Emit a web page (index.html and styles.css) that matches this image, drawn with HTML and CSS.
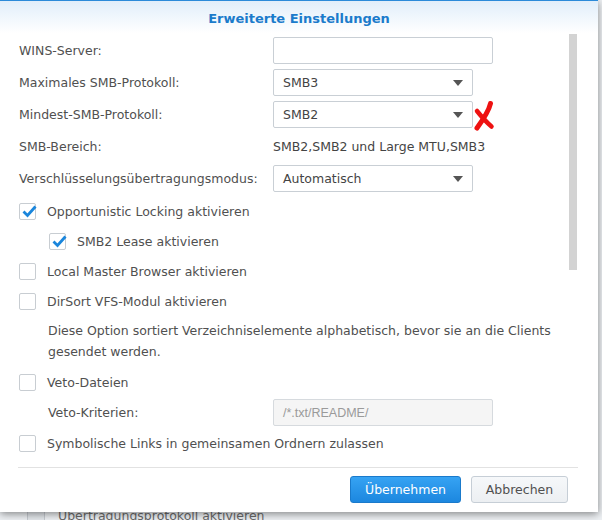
FILE: index.html
```html
<!DOCTYPE html>
<html lang="de">
<head>
<meta charset="utf-8">
<title>Erweiterte Einstellungen</title>
<link rel="stylesheet" href="styles.css">
</head>
<body>
<div class="page">
  <div class="bg-row">
    <span class="bg-box"></span>
    <span class="bg-text">Übertragungsprotokoll aktivieren</span>
  </div>
</div>

<div class="dialog">
  <div class="header">Erweiterte Einstellungen</div>
  <div class="body">
    <div class="scroll">
      <div class="field">
        <span class="label">WINS-Server:</span>
        <span class="input wide"></span>
      </div>
      <div class="field">
        <span class="label">Maximales SMB-Protokoll:</span>
        <span class="select">SMB3<span class="arrow"></span></span>
      </div>
      <div class="field">
        <span class="label">Mindest-SMB-Protokoll:</span>
        <span class="select">SMB2<span class="arrow"></span></span>
        <svg class="redx" width="22" height="30" viewBox="0 0 22 30">
          <path d="M17.5 2.5 C16 9 12 16 4 27" fill="none" stroke="#ee1111" stroke-width="5" stroke-linecap="round"/>
          <path d="M4 10 C8 15 12 20 18.5 25.5" fill="none" stroke="#ee1111" stroke-width="4.5" stroke-linecap="round"/>
        </svg>
      </div>
      <div class="field">
        <span class="label">SMB-Bereich:</span>
        <span class="value">SMB2,SMB2 und Large MTU,SMB3</span>
      </div>
      <div class="field">
        <span class="label">Verschlüsselungsübertragungsmodus:</span>
        <span class="select">Automatisch<span class="arrow"></span></span>
      </div>

      <div class="check first">
        <span class="box on"><svg width="15" height="13" viewBox="0 0 15 13"><path d="M1.5 6.5 L5.5 10.5 L13.5 1.5" fill="none" stroke="#1a86dc" stroke-width="2.8"/></svg></span>
        <span>Opportunistic Locking aktivieren</span>
      </div>
      <div class="check sub">
        <span class="box on"><svg width="15" height="13" viewBox="0 0 15 13"><path d="M1.5 6.5 L5.5 10.5 L13.5 1.5" fill="none" stroke="#1a86dc" stroke-width="2.8"/></svg></span>
        <span>SMB2 Lease aktivieren</span>
      </div>
      <div class="check">
        <span class="box"></span>
        <span>Local Master Browser aktivieren</span>
      </div>
      <div class="check">
        <span class="box"></span>
        <span>DirSort VFS-Modul aktivieren</span>
      </div>
      <p class="desc">Diese Option sortiert Verzeichniselemente alphabetisch, bevor sie an die Clients gesendet werden.</p>
      <div class="check">
        <span class="box"></span>
        <span>Veto-Dateien</span>
      </div>
      <div class="field indent">
        <span class="label">Veto-Kriterien:</span>
        <span class="input wide disabled">/*.txt/README/</span>
      </div>
      <div class="check">
        <span class="box"></span>
        <span>Symbolische Links in gemeinsamen Ordnern zulassen</span>
      </div>
    </div>
    <div class="scrollbar"></div>
  </div>
  <div class="footer">
    <button class="btn primary">Übernehmen</button>
    <button class="btn">Abbrechen</button>
  </div>
</div>
</body>
</html>
```

FILE: styles.css
```css
html, body {
  margin: 0;
  padding: 0;
}
body {
  width: 602px;
  height: 520px;
  overflow: hidden;
  background: #eef1f4;
  font-family: "DejaVu Sans", Verdana, sans-serif;
  font-size: 12.5px;
  color: #505050;
  position: relative;
}
.page {
  height: 520px;
  display: flex;
  flex-direction: column;
  justify-content: flex-end;
}
.bg-row {
  display: flex;
  align-items: center;
  gap: 13px;
  padding: 0 0 0 27px;
  height: 24px;
  margin-bottom: -7px;
}
.bg-box {
  width: 16px;
  height: 16px;
  border: 1px solid #c7ccd2;
  background: #e4e8ec;
  border-radius: 2px;
}
.bg-text {
  color: #6a6a6a;
}

.dialog {
  position: absolute;
  left: 0;
  top: 0;
  width: 598px;
  height: 512px;
  background: #fff;
  box-shadow: 0 2px 8px rgba(0, 0, 0, 0.45);
  display: flex;
  flex-direction: column;
}
.header {
  border-top: 1px solid #2b8ad9;
  background: linear-gradient(#e1eefa, #ffffff);
  color: #1b7bcb;
  font-weight: bold;
  font-size: 13px;
  display: flex;
  align-items: center;
  justify-content: center;
  box-sizing: border-box;
  height: 33px;
  padding-top: 2px;
}
.body {
  position: relative;
  height: 430px;
  overflow: hidden;
}
.scroll {
  padding: 4px 0 0 19px;
}
.field {
  display: flex;
  align-items: center;
  height: 27px;
  margin-bottom: 5px;
}
.field .label {
  width: 254px;
  flex: none;
}
.input, .select {
  box-sizing: border-box;
  height: 27px;
  border: 1px solid #c9cfd5;
  border-radius: 2px;
  background: #fff;
  display: flex;
  align-items: center;
  padding-left: 9px;
  color: #444;
}
.input.wide { width: 220px; }
.select {
  width: 200px;
  justify-content: space-between;
  padding-right: 9px;
}
.arrow {
  width: 0;
  height: 0;
  border-left: 5.5px solid transparent;
  border-right: 5.5px solid transparent;
  border-top: 6px solid #555;
}
.redx {
  margin-top: 3px;
}
.value {
  color: #444;
}
.input.disabled {
  background: #f5f5f5;
  border-color: #d6dade;
  color: #9a9a9a;
  font-family: "Liberation Sans", Arial, sans-serif;
  font-size: 12.5px;
}
.field.indent {
  height: 31px;
  margin: 0;
}
.field.indent .label {
  padding-left: 29px;
  box-sizing: border-box;
}
.check {
  display: flex;
  align-items: center;
  height: 30px;
  gap: 11px;
}
.check.first { margin-top: -1px; }
.check.sub { padding-left: 30px; }
.box {
  box-sizing: border-box;
  width: 17px;
  height: 17px;
  border: 1px solid #c8cdd2;
  border-radius: 2px;
  background: #fff;
  flex: none;
  position: relative;
}
.box svg {
  position: absolute;
  left: 2px;
  top: 1px;
}
.desc {
  margin: 4px 0 5px 29px;
  line-height: 21px;
  width: 520px;
}
.scrollbar {
  position: absolute;
  left: 569px;
  top: 1px;
  width: 8px;
  height: 236px;
  background: #d3d3d3;
}
.footer {
  margin: 4px 20px 0 18px;
  border-top: 1px solid #e2e2e2;
  display: flex;
  justify-content: flex-end;
  gap: 10px;
  padding: 8px 10px 0 0;
}
.btn {
  font-family: "DejaVu Sans", Verdana, sans-serif;
  font-size: 12.5px;
  height: 27px;
  border-radius: 3px;
  border: 1px solid #c6ced6;
  background: linear-gradient(#f6f8fa, #eceff2);
  color: #505050;
  padding: 0;
  width: 97px;
}
.btn.primary {
  width: 111px;
  border-color: #1a7acb;
  background: linear-gradient(#36a3f3, #1c87df);
  color: #fff;
}
```
